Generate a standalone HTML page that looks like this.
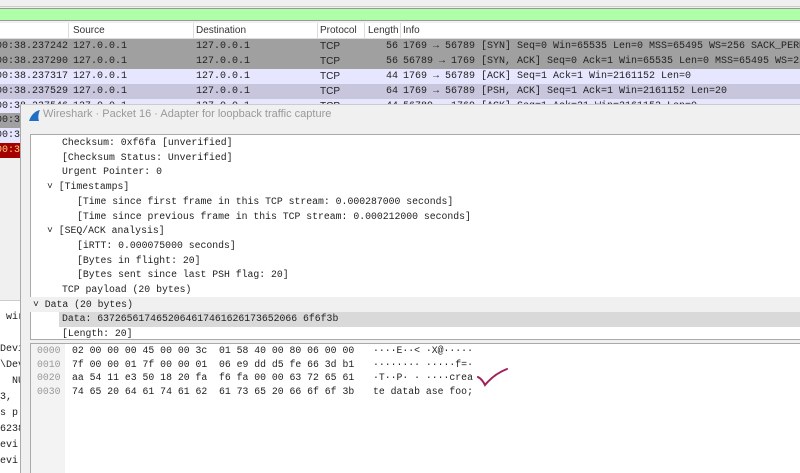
<!DOCTYPE html>
<html style="overflow:hidden;width:800px;height:473px"><head><meta charset="utf-8"><style>
*{margin:0;padding:0;box-sizing:border-box}
body{width:800px;height:473px;overflow:hidden;background:#f0f0f0;position:relative;font-family:"Liberation Mono",monospace;font-size:10px;color:#222}
.a{position:absolute;white-space:pre}
.sans{font-family:"Liberation Sans",sans-serif}
.row{position:absolute;left:0;width:800px;height:15px;line-height:15px;white-space:pre}
.t{position:absolute;top:0;white-space:pre}
.l{position:absolute;white-space:pre;font-size:9.8px;line-height:14.7px}
</style></head><body>
<div class="a" style="left:0;top:0;width:800px;height:7px;background:#f0f0f0;border-bottom:1px solid #ccc"></div>
<div class="a" style="left:0;top:8px;width:800px;height:13px;background:#afffa8;border-top:1px solid #999;border-bottom:1px solid #999"></div>
<div class="row sans" style="top:23px;height:16px;line-height:16px;background:#fff;border-bottom:1px solid #ddd;color:#333">
<span class="t" style="left:73px">Source</span><span class="t" style="left:196px">Destination</span><span class="t" style="left:320px">Protocol</span><span class="t" style="left:368px">Length</span><span class="t" style="left:403px">Info</span><span class="t" style="left:68px;height:15px;border-left:1px solid #ddd"></span><span class="t" style="left:193px;height:15px;border-left:1px solid #ddd"></span><span class="t" style="left:317px;height:15px;border-left:1px solid #ddd"></span><span class="t" style="left:364px;height:15px;border-left:1px solid #ddd"></span><span class="t" style="left:400px;height:15px;border-left:1px solid #ddd"></span></div>
<div class="row" style="top:39px;background:#a0a0a0"><span class="t" style="left:-4px">00:38.237242</span><span class="t" style="left:73px">127.0.0.1</span><span class="t" style="left:196px">127.0.0.1</span><span class="t sans" style="left:320px">TCP</span><span class="t" style="left:386px">56</span><span class="t" style="left:403px">1769 → 56789 [SYN] Seq=0 Win=65535 Len=0 MSS=65495 WS=256 SACK_PERM</span></div>
<div class="row" style="top:54px;background:#a0a0a0"><span class="t" style="left:-4px">00:38.237290</span><span class="t" style="left:73px">127.0.0.1</span><span class="t" style="left:196px">127.0.0.1</span><span class="t sans" style="left:320px">TCP</span><span class="t" style="left:386px">56</span><span class="t" style="left:403px">56789 → 1769 [SYN, ACK] Seq=0 Ack=1 Win=65535 Len=0 MSS=65495 WS=256</span></div>
<div class="row" style="top:69px;background:#e7e6ff"><span class="t" style="left:-4px">00:38.237317</span><span class="t" style="left:73px">127.0.0.1</span><span class="t" style="left:196px">127.0.0.1</span><span class="t sans" style="left:320px">TCP</span><span class="t" style="left:386px">44</span><span class="t" style="left:403px">1769 → 56789 [ACK] Seq=1 Ack=1 Win=2161152 Len=0</span></div>
<div class="row" style="top:84px;background:#c8c6dc"><span class="t" style="left:-4px">00:38.237529</span><span class="t" style="left:73px">127.0.0.1</span><span class="t" style="left:196px">127.0.0.1</span><span class="t sans" style="left:320px">TCP</span><span class="t" style="left:386px">64</span><span class="t" style="left:403px">1769 → 56789 [PSH, ACK] Seq=1 Ack=1 Win=2161152 Len=20</span></div>
<div class="row" style="top:99px;background:#e7e6ff"><span class="t" style="left:-4px">00:38.237546</span><span class="t" style="left:73px">127.0.0.1</span><span class="t" style="left:196px">127.0.0.1</span><span class="t sans" style="left:320px">TCP</span><span class="t" style="left:386px">44</span><span class="t" style="left:403px">56789 → 1769 [ACK] Seq=1 Ack=21 Win=2161152 Len=0</span></div>
<div class="row" style="top:113px;background:#a0a0a0;width:22px;overflow:hidden"><span class="t" style="left:-4px">00:3</span></div>
<div class="row" style="top:128px;background:#e7e6ff;width:22px;overflow:hidden"><span class="t" style="left:-4px">00:3</span></div>
<div class="row" style="top:143px;background:#a40000;color:#ffd27a;width:22px;overflow:hidden"><span class="t" style="left:-4px">00:3</span></div>
<div class="a" style="left:0;top:300px;width:22px;height:173px;background:#fff;border-top:1px solid #ccc;overflow:hidden;line-height:16px;padding-top:9px"> wir

Devi
\Dev
  NU
3, 
s p
6238
evi
evi
ce </div>
<div class="a" style="left:20px;top:104px;width:780px;height:369px;background:#f0f0f0;border-left:1px solid #aaa;border-top:1px solid #ccc"></div>
<svg class="a" style="left:27px;top:110px" width="14" height="12" viewBox="0 0 14 12"><path d="M2 11 C4 5 8 1 13 0 C11 4 11 8 12 11 Z" fill="#1f6fc5"/></svg>
<div class="a sans" style="left:43px;top:108px;font-size:11px;color:#999">Wireshark · Packet 16 · Adapter for loopback traffic capture</div>
<div class="a" style="left:30px;top:134px;width:770px;height:206px;background:#fff;border-top:1px solid #aaa;border-left:1px solid #aaa"></div>
<div class="a" style="left:30px;top:297px;width:770px;height:15px;background:#f0f0f0"></div>
<div class="a" style="left:59px;top:312px;width:741px;height:15px;background:#d9d9d9"></div>
<div class="l" style="left:62px;top:136px">Checksum: 0xf6fa [unverified]</div>
<div class="l" style="left:62px;top:150.7px">[Checksum Status: Unverified]</div>
<div class="l" style="left:62px;top:165.4px">Urgent Pointer: 0</div>
<div class="l" style="left:47px;top:180.1px">˅ [Timestamps]</div>
<div class="l" style="left:77px;top:194.8px">[Time since first frame in this TCP stream: 0.000287000 seconds]</div>
<div class="l" style="left:77px;top:209.5px">[Time since previous frame in this TCP stream: 0.000212000 seconds]</div>
<div class="l" style="left:47px;top:224.2px">˅ [SEQ/ACK analysis]</div>
<div class="l" style="left:77px;top:238.9px">[iRTT: 0.000075000 seconds]</div>
<div class="l" style="left:77px;top:253.6px">[Bytes in flight: 20]</div>
<div class="l" style="left:77px;top:268.3px">[Bytes sent since last PSH flag: 20]</div>
<div class="l" style="left:62px;top:283px">TCP payload (20 bytes)</div>
<div class="l" style="left:33px;top:297.7px">˅ Data (20 bytes)</div>
<div class="l" style="left:62px;top:312.4px">Data: 6372656174652064617461626173652066 6f6f3b</div>
<div class="l" style="left:62px;top:327.1px;height:12px;overflow:hidden">[Length: 20]</div>
<div class="a" style="left:30px;top:339px;width:770px;height:4px;background:#f0f0f0;border-top:1px solid #aaa"></div>
<div class="a" style="left:30px;top:343px;width:770px;height:130px;background:#fff;border-top:1px solid #aaa;border-left:1px solid #aaa"></div>
<div class="a" style="left:31px;top:344px;width:34px;height:129px;background:#f3f3f3"></div>
<div class="a" style="left:37px;top:344px;line-height:13.5px;font-size:9.8px;color:#999">0000
0010
0020
0030</div>
<div class="a" style="left:72px;top:344px;line-height:13.5px;font-size:9.8px">02 00 00 00 45 00 00 3c  01 58 40 00 80 06 00 00
7f 00 00 01 7f 00 00 01  06 e9 dd d5 fe 66 3d b1
aa 54 11 e3 50 18 20 fa  f6 fa 00 00 63 72 65 61
74 65 20 64 61 74 61 62  61 73 65 20 66 6f 6f 3b</div>
<div class="a" style="left:373px;top:344px;line-height:13.5px;font-size:9.8px">····E··&lt; ·X@·····
········ ·····f=·
·T··P· · ····crea
te datab ase foo;</div>
<svg class="a" style="left:476px;top:366px" width="34" height="22" viewBox="0 0 34 22"><path d="M2 11 Q6 13 9 19 Q18 8 31 3" fill="none" stroke="#a0205a" stroke-width="2" stroke-linecap="round"/></svg>
</body></html>
